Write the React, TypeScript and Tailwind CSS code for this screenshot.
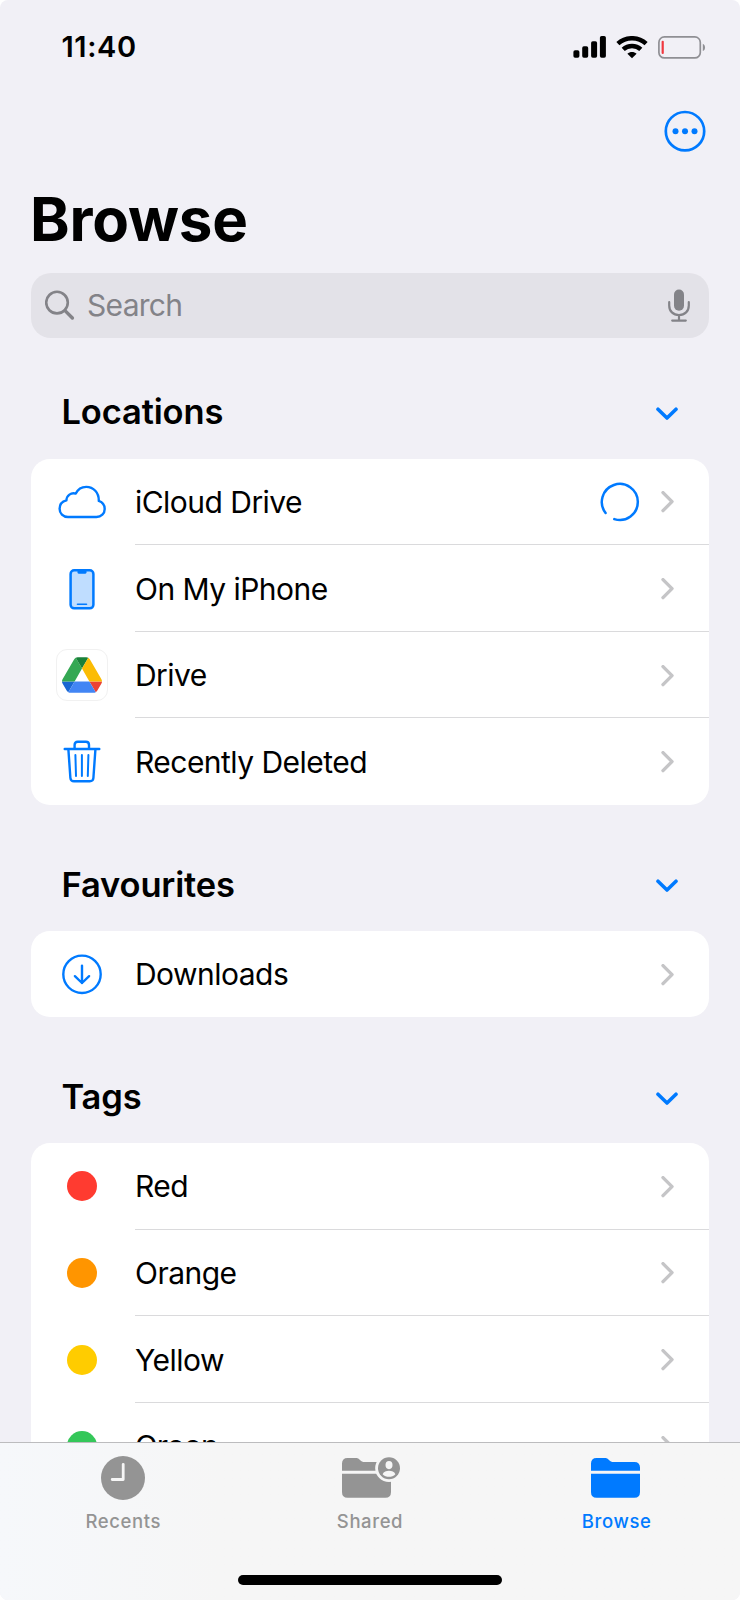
import type { ReactNode } from 'react';

const blue = '#007aff';

function SignalIcon() {
  return (
    <svg width="33" height="22" viewBox="0 0 33 22" fill="#000">
      <rect x="0.4" y="14.2" width="6" height="7.6" rx="1.7" />
      <rect x="9.2" y="10.3" width="6" height="11.5" rx="1.7" />
      <rect x="18.1" y="5.2" width="6" height="16.6" rx="1.7" />
      <rect x="26.9" y="0" width="6" height="21.8" rx="1.7" />
    </svg>
  );
}

function WifiIcon() {
  return (
    <svg width="32" height="23" viewBox="0 0 32 23" fill="none" stroke="#000" strokeWidth="4.5">
      <path d="M1.9 7.7C9.7 .4 22.3 .4 30.1 7.7" />
      <path d="M7.2 13.4C12 8.9 20 8.9 24.8 13.4" />
      <path d="M16 22.3L11.4 17.7C13.9 15.3 18.1 15.3 20.6 17.7Z" fill="#000" stroke="none" />
    </svg>
  );
}

function BatteryIcon() {
  return (
    <svg width="48" height="23" viewBox="0 0 48 23" fill="none">
      <rect x="0.9" y="0.9" width="41.4" height="21" rx="5.5" stroke="#8f8f94" strokeWidth="1.7" />
      <rect x="3.6" y="4.7" width="2.2" height="13.4" rx="1" fill="#f0383f" />
      <path d="M44.8 7.7C46.4 8.4 47 9.8 47 11.4S46.4 14.4 44.8 15.1Z" fill="#8f8f94" />
    </svg>
  );
}

function MoreIcon() {
  return (
    <svg width="42" height="42" viewBox="0 0 42 42" fill={blue}>
      <circle cx="21" cy="21.2" r="19.2" fill="none" stroke={blue} strokeWidth="2.7" />
      <circle cx="11.5" cy="21.2" r="3" />
      <circle cx="21" cy="21.2" r="3" />
      <circle cx="30.5" cy="21.2" r="3" />
    </svg>
  );
}

function SearchIcon() {
  return (
    <svg width="30" height="31" viewBox="0 0 30 31" fill="none" stroke="#838388">
      <circle cx="12" cy="12.6" r="10.8" strokeWidth="2.6" />
      <path d="M20 20.6L27.4 28" strokeWidth="3.4" strokeLinecap="round" />
    </svg>
  );
}

function MicIcon() {
  return (
    <svg width="22" height="33" viewBox="0 0 22 33" fill="none" stroke="#838388" strokeWidth="2.2" strokeLinecap="round">
      <rect x="6" y="0.5" width="10" height="21.2" rx="5" fill="#838388" stroke="none" />
      <path d="M1.2 13.2V16.4C1.2 22.2 5.2 26 11 26S20.8 22.2 20.8 16.4V13.2" />
      <path d="M11 26V31.4M4.2 31.6H17.8" />
    </svg>
  );
}

function ChevronDown() {
  return (
    <svg width="22" height="14" viewBox="0 0 22 14" fill="none" stroke={blue} strokeWidth="3.6" strokeLinecap="round" strokeLinejoin="round">
      <path d="M2 2.2L11 11L20 2.2" />
    </svg>
  );
}

function ChevronRight() {
  return (
    <svg width="13" height="22" viewBox="0 0 13 22" fill="none" stroke="#c5c5c7" strokeWidth="3.4" strokeLinecap="round" strokeLinejoin="round">
      <path d="M2 1.6L11 10.6L2 19.6" />
    </svg>
  );
}

function Spinner() {
  return (
    <svg width="40" height="40" viewBox="0 0 40 40" fill="none" stroke={blue} strokeWidth="2.5" strokeLinecap="round">
      <path d="M5.6 31A18 18 0 1 1 14.3 37.1" />
    </svg>
  );
}

function CloudIcon() {
  return (
    <svg width="52" height="52" viewBox="0 0 52 52" fill="none" stroke={blue} strokeWidth="2.4" strokeLinejoin="round">
      <path d="M12 41C7 41 3.6 37.5 3.6 32.8C3.6 28.6 6.3 25.3 10.4 24.3C10.8 19.4 14.9 16.3 19.8 17.6C21.8 13.4 25.6 10.9 30.2 10.9C37.5 10.9 43 16.6 42.8 24.9C46.5 26.2 48.7 29.2 48.7 33C48.7 37.6 45.2 41 40.5 41Z" />
    </svg>
  );
}

function PhoneIcon() {
  return (
    <svg width="52" height="52" viewBox="0 0 52 52" fill="none">
      <rect x="14.6" y="7.3" width="22.8" height="38" rx="3.6" fill="#bfddff" stroke={blue} strokeWidth="2.5" />
      <path d="M21.5 7.5H30.5V9.2Q30.5 10.8 28.9 10.8H23.1Q21.5 10.8 21.5 9.2Z" fill={blue} />
      <path d="M21.5 41.2H30.5" stroke={blue} strokeWidth="1.6" strokeLinecap="round" />
    </svg>
  );
}

function GoogleDriveIcon() {
  return (
    <div className="flex h-[52px] w-[52px] items-center justify-center rounded-[11px] border border-[#f1f1f1]">
      <svg width="40" height="36" viewBox="0 0 87.3 78">
        <path fill="#1967d2" d="m6.6 66.85 3.85 6.65c.8 1.4 1.95 2.5 3.3 3.3l13.75-23.8h-27.5c0 1.55.4 3.1 1.2 4.5z" />
        <path fill="#34a853" d="m43.65 25-13.75-23.8c-1.35.8-2.5 1.9-3.3 3.3l-25.4 44a9.06 9.06 0 0 0-1.2 4.5h27.5z" />
        <path fill="#ea4335" d="m73.55 76.8c1.35-.8 2.5-1.9 3.3-3.3l1.6-2.75 7.65-13.25c.8-1.4 1.2-2.95 1.2-4.5h-27.5z" />
        <path fill="#188038" d="m43.65 25 13.75-23.8c-1.35-.8-2.9-1.2-4.5-1.2h-18.5c-1.6 0-3.15.45-4.5 1.2z" />
        <path fill="#4285f4" d="m59.8 53h-32.3l-13.75 23.8c1.35.8 2.9 1.2 4.5 1.2h50.8c1.6 0 3.15-.45 4.5-1.2z" />
        <path fill="#fbbc04" d="m73.4 26.5-12.7-22c-.8-1.4-1.95-2.5-3.3-3.3l-13.75 23.8 16.15 28h27.45c0-1.55-.4-3.1-1.2-4.5z" />
      </svg>
    </div>
  );
}

function TrashIcon() {
  return (
    <svg width="52" height="52" viewBox="0 0 52 52" fill="none" stroke={blue} strokeWidth="2.4" strokeLinecap="round">
      <path d="M8.7 13H43.3" />
      <path d="M18.6 12.6V8.9Q18.6 5.8 21.7 5.8H29.9Q33 5.8 33 8.9V12.6" />
      <path d="M12.4 13.6L14.4 42Q14.7 45.3 18 45.3H33.8Q37.1 45.3 37.4 42L39.4 13.6" />
      <path d="M19.4 19L20 40M25.9 19V40M32.4 19L31.8 40" strokeWidth="2" />
    </svg>
  );
}

function DownloadIcon() {
  return (
    <svg width="52" height="52" viewBox="0 0 52 52" fill="none" stroke={blue} strokeWidth="2.4" strokeLinecap="round" strokeLinejoin="round">
      <circle cx="26" cy="26.3" r="18.7" />
      <path d="M26 17.6V35M18.9 28.2L26 35L33.1 28.2" />
    </svg>
  );
}

function ClockIcon() {
  return (
    <svg width="44" height="44" viewBox="0 0 44 44" fill="none">
      <circle cx="22" cy="22" r="22" fill="#949494" />
      <path d="M22.2 8.3V23.5H11.2" stroke="#f6f6f6" strokeWidth="2.8" strokeLinecap="round" strokeLinejoin="round" />
    </svg>
  );
}

function Folder() {
  return (
    <>
      <path d="M0 14.8V7.6Q0 2 5.6 2H13.4C16.8 2 17.4 3.6 19.2 5C20.2 5.9 21 6 22.6 6H43.4Q49 6 49 11.6V14.8Z" />
      <path d="M0 17.8H49V36Q49 41.8 43.4 41.8H5.6Q0 41.8 0 36Z" />
    </>
  );
}

function SharedIcon() {
  return (
    <svg width="58" height="44" viewBox="0 0 58 44" fill="#949494" className="ml-[3px]">
      <Folder />
      <circle cx="47" cy="12.2" r="13.8" fill="#f6f6f6" />
      <circle cx="47" cy="12.2" r="11" />
      <ellipse cx="47" cy="9.1" rx="3.5" ry="4.1" fill="#f6f6f6" />
      <path d="M40.6 18.2C41.8 15.5 44.2 14.8 47 14.8S52.2 15.5 53.4 18.2C51.6 20 49.4 20.8 47 20.8S42.4 20 40.6 18.2Z" fill="#f6f6f6" />
    </svg>
  );
}

function BrowseIcon() {
  return (
    <svg width="49" height="44" viewBox="0 0 49 44" fill={blue} className="mr-[2px]">
      <Folder />
    </svg>
  );
}

type Item = { label: string; icon: ReactNode; loading?: boolean };

const locations: Item[] = [
  { label: 'iCloud Drive', icon: <CloudIcon />, loading: true },
  { label: 'On My iPhone', icon: <PhoneIcon /> },
  { label: 'Drive', icon: <GoogleDriveIcon /> },
  { label: 'Recently Deleted', icon: <TrashIcon /> }
];

const favourites: Item[] = [{ label: 'Downloads', icon: <DownloadIcon /> }];

const tags: Item[] = [
  { label: 'Red', icon: <span className="h-[30px] w-[30px] rounded-full bg-[#ff3b30]" /> },
  { label: 'Orange', icon: <span className="h-[30px] w-[30px] rounded-full bg-[#ff9500]" /> },
  { label: 'Yellow', icon: <span className="h-[30px] w-[30px] rounded-full bg-[#ffcc00]" /> },
  { label: 'Green', icon: <span className="h-[30px] w-[30px] rounded-full bg-[#34c759]" /> }
];

const tabs = [
  { label: 'Recents', icon: <ClockIcon />, color: 'text-[#949494]' },
  { label: 'Shared', icon: <SharedIcon />, color: 'text-[#949494]' },
  { label: 'Browse', icon: <BrowseIcon />, color: 'text-[#007aff]' }
];

function Section({ title, items }: { title: string; items: Item[] }) {
  return (
    <section>
      <div className="flex h-[92.7px] items-center justify-between pr-[31px] pl-[30.5px]">
        <h2 className="text-[34.5px] font-semibold tracking-[-0.15px]">{title}</h2>
        <div className="pt-[4px]">
          <ChevronDown />
        </div>
      </div>
      <ul className="overflow-hidden rounded-[19px] bg-white">
        {items.map(({ label, icon, loading }) => (
          <li key={label} className="group flex h-[86.6px]">
            <div className="flex w-[103.5px] items-center justify-center pr-[1px]">{icon}</div>
            <div className="flex flex-1 items-center border-b border-[#dadadc] pt-[2px] pr-[35px] group-last:border-transparent">
              <span className="flex-1 pl-[0.5px] text-[30px] tracking-[-0.53px]">{label}</span>
              {loading && (
                <div className="mr-[21px]">
                  <Spinner />
                </div>
              )}
              <ChevronRight />
            </div>
          </li>
        ))}
      </ul>
    </section>
  );
}

export default function App() {
  return (
    <div className="flex h-[1600px] w-[740px] flex-col overflow-hidden rounded-lg bg-[#f1f0f6] font-['Inter',sans-serif] text-black">
      <header className="flex h-[94px] shrink-0 items-center justify-between pr-[34px] pl-[61.5px]">
        <span className="text-[29px] font-semibold tracking-[0.6px]">11:40</span>
        <div className="flex items-center gap-[10px]">
          <SignalIcon />
          <WifiIcon />
          <BatteryIcon />
        </div>
      </header>

      <main className="min-h-0 flex-1 overflow-hidden px-[31px]">
        <div className="flex justify-end pt-4 pr-[3px]">
          <MoreIcon />
        </div>
        <h1 className="mt-[37px] -ml-px text-[60px] leading-[60px] font-bold tracking-[-0.2px]">Browse</h1>

        <div className="mt-6 flex h-[65px] items-center rounded-[20px] bg-[#e3e2e8] pr-[19px] pl-[14px]">
          <SearchIcon />
          <span className="flex-1 pl-3 text-[30px] tracking-[-0.7px] text-[#838388]">Search</span>
          <MicIcon />
        </div>

        <div className="mt-7 flex flex-col gap-[33px]">
          <Section title="Locations" items={locations} />
          <Section title="Favourites" items={favourites} />
          <Section title="Tags" items={tags} />
        </div>
      </main>

      <footer className="flex h-[158px] shrink-0 flex-col items-center justify-between border-t border-[#bcbcbe] bg-linear-to-r from-[#f6f8fb] to-[#f6f6f6] to-30% pt-[13px] pb-[15px]">
        <nav className="grid w-full grid-cols-3">
          {tabs.map(({ label, icon, color }) => (
            <div key={label} className="flex flex-col items-center gap-[9px]">
              {icon}
              <span className={`text-[18.5px] leading-6 font-medium tracking-[0.6px] ${color}`}>{label}</span>
            </div>
          ))}
        </nav>
        <div className="h-[10px] w-[264px] rounded-full bg-black" />
      </footer>
    </div>
  );
}
